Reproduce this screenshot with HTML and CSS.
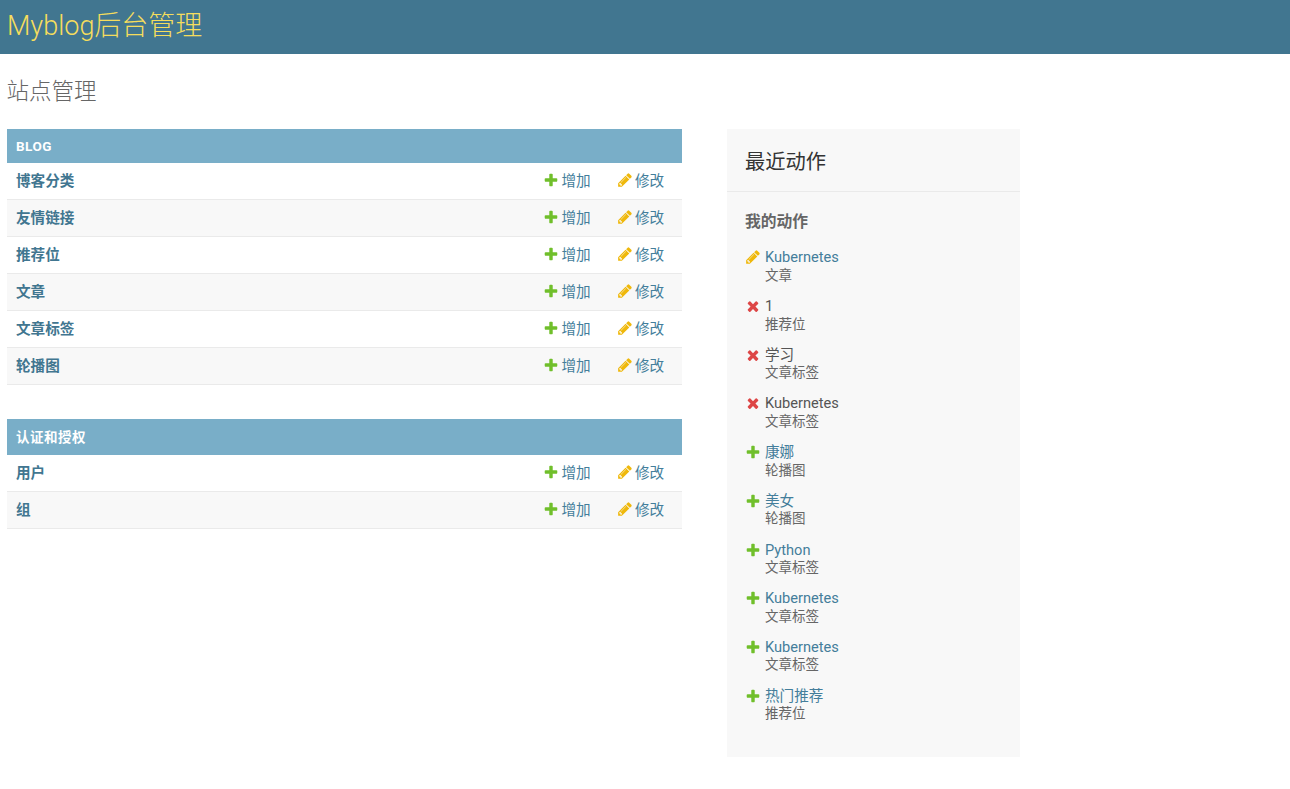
FILE: index.html
```html
<!DOCTYPE html>
<html lang="zh-CN">
<head>
<meta charset="utf-8">
<title>站点管理</title>
<link rel="stylesheet" href="styles.css">
</head>
<body>
<svg class="defs" width="0" height="0" aria-hidden="true">
  <symbol id="i-add" viewBox="0 0 1792 1792"><path fill="#70bf2b" d="M1600 796v192q0 40-28 68t-68 28h-416v416q0 40-28 68t-68 28h-192q-40 0-68-28t-28-68v-416h-416q-40 0-68-28t-28-68v-192q0-40 28-68t68-28h416v-416q0-40 28-68t68-28h192q40 0 68 28t28 68v416h416q40 0 68 28t28 68z"/></symbol>
  <symbol id="i-change" viewBox="0 0 1792 1792"><path fill="#efb80b" d="M491 1536l91-91-235-235-91 91v107h128v128h107zm523-928q0-22-22-22-10 0-17 7l-542 542q-7 7-7 17 0 22 22 22 10 0 17-7l542-542q7-7 7-17zm-54-192l416 416-832 832h-416v-416zm683 96q0 53-37 90l-166 166-416-416 166-165q36-38 90-38 53 0 91 38l235 234q37 39 37 91z"/></symbol>
  <symbol id="i-del" viewBox="0 0 1792 1792"><path fill="#dd4646" d="M1490 1322q0 40-28 68l-136 136q-28 28-68 28t-68-28l-294-294-294 294q-28 28-68 28t-68-28l-136-136q-28-28-28-68t28-68l294-294-294-294q-28-28-28-68t28-68l136-136q28-28 68-28t68 28l294 294 294-294q28-28 68-28t68 28l136 136q28 28 28 68t-28 68l-294 294 294 294q28 28 28 68z"/></symbol>
</svg>
<header class="site-header"><a class="site-name" href="#">Myblog后台管理</a></header>
<h1 class="page-title">站点管理</h1>
<main class="layout">
  <div class="apps">
    <section class="app">
      <h2 class="caption caption-latin">BLOG</h2>
      <div class="row"><a class="model" href="#">博客分类</a><a class="act act-add" href="#"><svg class="icon"><use href="#i-add"/></svg>增加</a><a class="act act-change" href="#"><svg class="icon"><use href="#i-change"/></svg>修改</a></div>
      <div class="row"><a class="model" href="#">友情链接</a><a class="act act-add" href="#"><svg class="icon"><use href="#i-add"/></svg>增加</a><a class="act act-change" href="#"><svg class="icon"><use href="#i-change"/></svg>修改</a></div>
      <div class="row"><a class="model" href="#">推荐位</a><a class="act act-add" href="#"><svg class="icon"><use href="#i-add"/></svg>增加</a><a class="act act-change" href="#"><svg class="icon"><use href="#i-change"/></svg>修改</a></div>
      <div class="row"><a class="model" href="#">文章</a><a class="act act-add" href="#"><svg class="icon"><use href="#i-add"/></svg>增加</a><a class="act act-change" href="#"><svg class="icon"><use href="#i-change"/></svg>修改</a></div>
      <div class="row"><a class="model" href="#">文章标签</a><a class="act act-add" href="#"><svg class="icon"><use href="#i-add"/></svg>增加</a><a class="act act-change" href="#"><svg class="icon"><use href="#i-change"/></svg>修改</a></div>
      <div class="row"><a class="model" href="#">轮播图</a><a class="act act-add" href="#"><svg class="icon"><use href="#i-add"/></svg>增加</a><a class="act act-change" href="#"><svg class="icon"><use href="#i-change"/></svg>修改</a></div>
    </section>
    <section class="app">
      <h2 class="caption caption-cjk">认证和授权</h2>
      <div class="row"><a class="model" href="#">用户</a><a class="act act-add" href="#"><svg class="icon"><use href="#i-add"/></svg>增加</a><a class="act act-change" href="#"><svg class="icon"><use href="#i-change"/></svg>修改</a></div>
      <div class="row"><a class="model" href="#">组</a><a class="act act-add" href="#"><svg class="icon"><use href="#i-add"/></svg>增加</a><a class="act act-change" href="#"><svg class="icon"><use href="#i-change"/></svg>修改</a></div>
    </section>
  </div>
  <aside class="recent">
    <h2 class="recent-title">最近动作</h2>
    <h3 class="recent-sub">我的动作</h3>
    <ul class="actions">
      <li class="item"><svg class="icon item-icon"><use href="#i-change"/></svg><div><a class="item-link" href="#">Kubernetes</a><div class="item-type">文章</div></div></li>
      <li class="item"><svg class="icon item-icon"><use href="#i-del"/></svg><div><span class="item-plain">1</span><div class="item-type">推荐位</div></div></li>
      <li class="item"><svg class="icon item-icon"><use href="#i-del"/></svg><div><span class="item-plain">学习</span><div class="item-type">文章标签</div></div></li>
      <li class="item"><svg class="icon item-icon"><use href="#i-del"/></svg><div><span class="item-plain">Kubernetes</span><div class="item-type">文章标签</div></div></li>
      <li class="item"><svg class="icon item-icon"><use href="#i-add"/></svg><div><a class="item-link" href="#">康娜</a><div class="item-type">轮播图</div></div></li>
      <li class="item"><svg class="icon item-icon"><use href="#i-add"/></svg><div><a class="item-link" href="#">美女</a><div class="item-type">轮播图</div></div></li>
      <li class="item"><svg class="icon item-icon"><use href="#i-add"/></svg><div><a class="item-link" href="#">Python</a><div class="item-type">文章标签</div></div></li>
      <li class="item"><svg class="icon item-icon"><use href="#i-add"/></svg><div><a class="item-link" href="#">Kubernetes</a><div class="item-type">文章标签</div></div></li>
      <li class="item"><svg class="icon item-icon"><use href="#i-add"/></svg><div><a class="item-link" href="#">Kubernetes</a><div class="item-type">文章标签</div></div></li>
      <li class="item"><svg class="icon item-icon"><use href="#i-add"/></svg><div><a class="item-link" href="#">热门推荐</a><div class="item-type">推荐位</div></div></li>
    </ul>
  </aside>
</main>
</body>
</html>
```
FILE: styles.css
```css
* { box-sizing: border-box; }
html, body { margin: 0; padding: 0; }
body {
  font-family: Roboto, "Noto Sans CJK SC", "Liberation Sans", sans-serif;
  font-size: 14.625px;
  color: #333;
  background: #fff;
}
a { text-decoration: none; color: #447e9b; }
.defs { position: absolute; }
.site-header {
  height: 54px;
  background: #417690;
  padding: 0 7px 2px;
  display: flex;
  align-items: center;
}
.site-name { font-size: 27px; font-weight: 300; color: #f5dd5d; line-height: 50px; }
.page-title {
  margin: 0 0 0 -0.5px;
  padding: 20px 7px 0;
  height: 75px;
  font-size: 22.5px;
  font-weight: 300;
  line-height: 34px;
  color: #666;
}
.layout { display: flex; align-items: flex-start; padding-left: 7px; }
.apps { width: 675px; }
.app { margin-bottom: 34px; }
.caption {
  margin: 0;
  padding: 0 9px 1px;
  background: #79aec8;
  color: #fff;
  font-size: 13.5px;
  font-weight: 700;
  letter-spacing: 0.5px;
  display: flex;
  align-items: center;
}
.caption-latin { height: 34px; padding-bottom: 0; }
.caption-cjk { height: 36px; padding-bottom: 2px; }
.row {
  height: 37px;
  display: flex;
  align-items: center;
  padding-left: 9px;
  padding-bottom: 3px;
  border-bottom: 1px solid #eaeaea;
  background: #fff;
}
.app .row:nth-child(odd) { background: #f8f8f8; }
.model { flex: 1; font-weight: 700; color: #417690; }
.act { display: flex; align-items: center; line-height: 20px; padding-top: 2px; }
.act-add { width: 74px; }
.act-change { width: 64px; }
.act .icon { margin-bottom: 2px; }
.act-change .icon { margin-right: 2.5px; }
.icon { width: 16px; height: 16px; margin-left: -1.5px; margin-right: 3px; flex: none; }
.recent {
  width: 293px;
  height: 628px;
  margin-left: 45px;
  background: #f8f8f8;
}
.recent-title {
  margin: 0;
  height: 63px;
  padding: 0 18px;
  font-size: 20.25px;
  font-weight: 400;
  line-height: 66px;
  color: #333;
  border-bottom: 1px solid #eaeaea;
}
.recent-sub {
  margin: 0;
  padding: 18px 18px 0;
  height: 57.4px;
  font-size: 15.75px;
  font-weight: 700;
  line-height: 24px;
  color: #666;
}
.actions { list-style: none; margin: 0; padding: 0 18px; }
.item { display: flex; height: 48.7px; line-height: 17.5px; }
.item-icon { margin: 0 4px 0 0; }
.item-plain { color: #555; }
.item-type { font-size: 13.5px; color: #666; line-height: 17.5px; }
```
